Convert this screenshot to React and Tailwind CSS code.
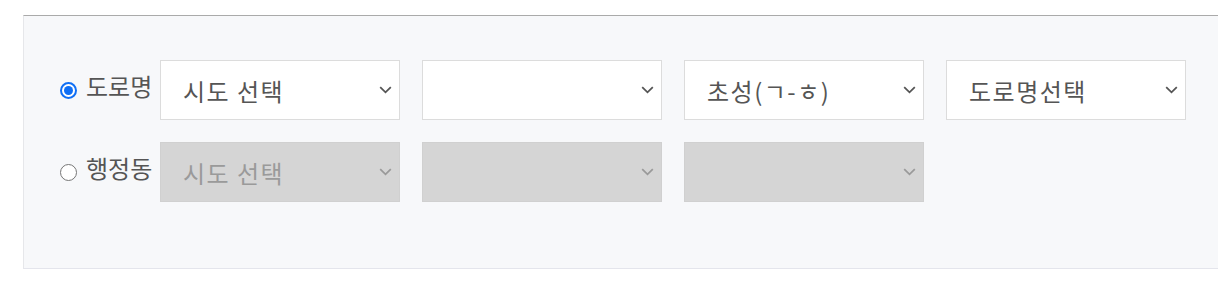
import React from "react";

const font = { fontFamily: '"Noto Sans CJK KR", "Noto Sans", sans-serif' };

function Chevron({ disabled }) {
  return (
    <svg width="13" height="8" viewBox="0 0 13 8" className="shrink-0">
      <path
        d="M1.2 1.2 L6.5 6.3 L11.8 1.2"
        fill="none"
        stroke={disabled ? "#9a9a9a" : "#555555"}
        strokeWidth="1.8"
      />
    </svg>
  );
}

function Select({ text, disabled }) {
  return (
    <div
      className={
        "flex items-center justify-between w-[240px] h-[60px] border pl-[22px] pr-[7px] " +
        (disabled
          ? "bg-[#d5d5d5] border-[#d0d0d0] text-[#9a9a9a]"
          : "bg-white border-[#dcdcdc] text-[#555555]")
      }
    >
      <span className="text-[24px] leading-none tracking-[1.5px] pt-[2px]">{text}</span>
      <Chevron disabled={disabled} />
    </div>
  );
}

function Radio({ checked }) {
  if (checked) {
    return (
      <div className="w-[17px] h-[17px] rounded-full border-[2px] border-[#0f6ff5] bg-white flex items-center justify-center shrink-0">
        <div className="w-[9px] h-[9px] rounded-full bg-[#0f6ff5]" />
      </div>
    );
  }
  return <div className="w-[17px] h-[17px] rounded-full border border-[#767676] bg-white shrink-0" />;
}

function Row({ label, checked, items, disabled }) {
  return (
    <div className="flex items-center">
      <div className="flex items-center w-[100px] h-[60px]">
        <Radio checked={checked} />
        <span className="ml-[9px] -mt-[8px] text-[24px] leading-none text-[#555555]">{label}</span>
      </div>
      <div className="flex gap-[22px]">
        {items.map((t, i) => (
          <Select key={i} text={t} disabled={disabled} />
        ))}
      </div>
    </div>
  );
}

export default function App() {
  return (
    <div className="w-[1218px] h-[281px] overflow-hidden bg-white" style={font}>
      <div className="mt-[15px] ml-[23px] w-[1230px] h-[254px] bg-[#f7f8fa] border-t border-t-[#aaaaaa] border-l border-l-[#e6e7ea] border-b border-b-[#e4e5ec] pt-[44px] pl-[36px]">
        <div className="flex flex-col gap-[22px]">
          <Row label="도로명" checked items={["시도 선택", "", "초성(ㄱ-ㅎ)", "도로명선택"]} />
          <Row label="행정동" items={["시도 선택", "", ""]} disabled />
        </div>
      </div>
    </div>
  );
}
